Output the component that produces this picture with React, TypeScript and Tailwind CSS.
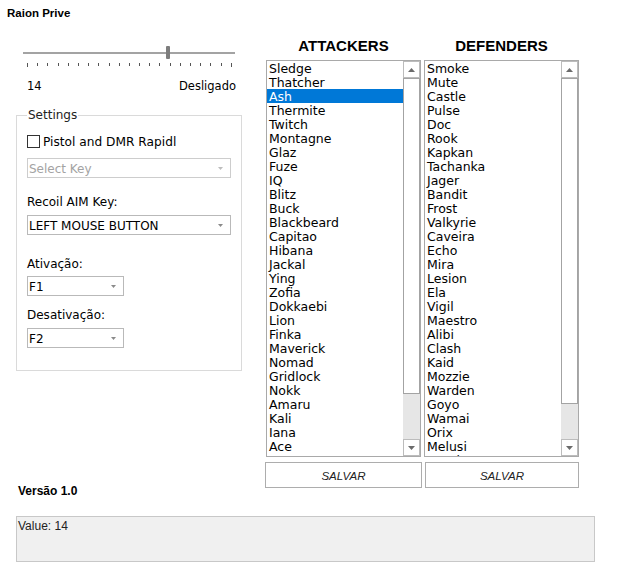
import React from "react";

const attackers = [
  "Sledge", "Thatcher", "Ash", "Thermite", "Twitch", "Montagne", "Glaz", "Fuze", "IQ", "Blitz",
  "Buck", "Blackbeard", "Capitao", "Hibana", "Jackal", "Ying", "Zofia", "Dokkaebi", "Lion", "Finka",
  "Maverick", "Nomad", "Gridlock", "Nokk", "Amaru", "Kali", "Iana", "Ace",
];

const defenders = [
  "Smoke", "Mute", "Castle", "Pulse", "Doc", "Rook", "Kapkan", "Tachanka", "Jager", "Bandit",
  "Frost", "Valkyrie", "Caveira", "Echo", "Mira", "Lesion", "Ela", "Vigil", "Maestro", "Alibi",
  "Clash", "Kaid", "Mozzie", "Warden", "Goyo", "Wamai", "Orix", "Melusi", "Aruni", "Thunderbird",
];

function Arrow({ up, color = "#6b6b6b" }: { up?: boolean; color?: string }) {
  return (
    <svg width="7" height="4" viewBox="0 0 7 4">
      {up ? <polygon points="0,4 7,4 3.5,0" fill={color} /> : <polygon points="0,0 7,0 3.5,4" fill={color} />}
    </svg>
  );
}

function Combo({ text, width, disabled }: { text: string; width: string; disabled?: boolean }) {
  return (
    <div
      className={`${width} h-[20px] flex items-center justify-between bg-white border pl-[1px] pr-[7px] ${
        disabled ? "border-[#cdcdcd] text-[#a3a3a3]" : "border-[#b9b9b9] text-black"
      }`}
    >
      <span className="leading-[14px] pt-[1px]">{text}</span>
      <svg width="5" height="3" viewBox="0 0 5 3">
        <polygon points="0,0 5,0 2.5,3" fill={disabled ? "#bdbdbd" : "#8a8a8a"} />
      </svg>
    </div>
  );
}

function ListBox({ items, selected, thumb }: { items: string[]; selected?: number; thumb: string }) {
  return (
    <div className="w-[155px] h-[397px] border border-[#a9a9a9] bg-white flex overflow-hidden">
      <div className="w-[136px] h-full overflow-hidden font-['DejaVu_Sans',Verdana,sans-serif] text-[12.5px] leading-[14px]">
        {items.map((it, i) => (
          <div
            key={it}
            className={`h-[14px] pl-[2px] pt-[1px] whitespace-nowrap ${i === selected ? "bg-[#0078d7] text-white" : "text-black"}`}
          >
            <span className="block -mt-[1px] pt-[1px] leading-[14px]">{it}</span>
          </div>
        ))}
      </div>
      <div className="w-[17px] h-full flex flex-col bg-[#e6e6e6]">
        <div className="h-[17px] shrink-0 border border-[#bcbcbc] bg-white flex items-center justify-center">
          <Arrow up />
        </div>
        <div className={`${thumb} shrink-0 border border-[#a3a3a3] bg-white`} />
        <div className="flex-1" />
        <div className="h-[17px] shrink-0 border border-[#bcbcbc] bg-white flex items-center justify-center">
          <Arrow />
        </div>
      </div>
    </div>
  );
}

export default function App() {
  const ticks = Array.from({ length: 21 }, (_, i) => i);
  return (
    <div className="w-[624px] h-[573px] bg-white overflow-hidden text-black font-['DejaVu_Sans',Verdana,sans-serif]">
      <div className="pl-[7px] pt-[6px] h-[26px] font-['Liberation_Sans',Arial,sans-serif] font-bold text-[11.5px] leading-[14px]">
        Raion Prive
      </div>

      <div className="flex items-start pl-[16px]">
        {/* Left column */}
        <div className="w-[225px] flex flex-col">
          <div className="ml-[7px] mt-[26px] w-[212px] h-[2px] bg-[#a3a3a3] relative">
            <div className="absolute left-[143px] -top-[6px] w-[4px] h-[13px] bg-[#7d7d7d] rounded-[1px]" />
          </div>
          <div className="ml-[11px] mt-[9px] w-[205px] h-[4px] flex justify-between items-start">
            {ticks.map((t) => (
              <div
                key={t}
                className={`w-[1px] bg-[#555] ${t === 0 || t === 20 ? "h-[4px]" : "h-[3px]"}`}
              />
            ))}
          </div>
          <div className="ml-[11px] mt-[12px] w-[209px] flex justify-between text-[11.5px] leading-[14px]">
            <span>14</span>
            <span>Desligado</span>
          </div>

          <fieldset className="mt-[15px] w-[225px] border border-[#dadada] pl-[10px] pr-[10px] pb-[22px] text-[12px]">
            <legend className="px-[1px] text-[12px] leading-[14px] text-[#222]">Settings</legend>
            <div className="mt-[13px] flex items-center h-[13px]">
              <div className="w-[13px] h-[13px] border border-[#333] bg-white" />
              <span className="ml-[3px] leading-[14px] text-[12.2px]">Pistol and DMR Rapidl</span>
            </div>
            <div className="mt-[10px]">
              <Combo text="Select Key" width="w-[204px]" disabled />
            </div>
            <div className="mt-[17px] h-[14px] leading-[14px]">Recoil AIM Key:</div>
            <div className="mt-[6px]">
              <Combo text="LEFT MOUSE BUTTON" width="w-[204px]" />
            </div>
            <div className="mt-[22px] h-[14px] leading-[14px]">Ativação:</div>
            <div className="mt-[5px]">
              <Combo text="F1" width="w-[97px]" />
            </div>
            <div className="mt-[12px] h-[14px] leading-[14px]">Desativação:</div>
            <div className="mt-[6px]">
              <Combo text="F2" width="w-[97px]" />
            </div>
          </fieldset>

          <div className="mt-[113px] ml-[2px] h-[14px] leading-[14px] font-['Liberation_Sans',Arial,sans-serif] font-bold text-[12px]">
            Versão 1.0
          </div>
        </div>

        {/* Right section */}
        <div className="ml-[24px] flex gap-[2px]">
          <div className="w-[157px] flex flex-col">
            <div className="mt-[11px] h-[17px] leading-[18px] text-center font-['Liberation_Sans',Arial,sans-serif] font-bold text-[15px]">
              ATTACKERS
            </div>
            <div className="mt-[6px] ml-[1px]">
              <ListBox items={attackers} selected={2} thumb="h-[316px]" />
            </div>
            <button className="mt-[5px] w-[157px] h-[26px] border border-[#adadad] bg-white italic font-['Liberation_Sans',Arial,sans-serif] text-[11.5px] leading-[16px] pt-[1px] text-[#222]">
              SALVAR
            </button>
          </div>
          <div className="w-[155px] flex flex-col">
            <div className="mt-[11px] h-[17px] leading-[18px] text-center font-['Liberation_Sans',Arial,sans-serif] font-bold text-[15px]">
              DEFENDERS
            </div>
            <div className="mt-[6px]">
              <ListBox items={defenders} thumb="h-[326px]" />
            </div>
            <button className="mt-[5px] ml-[1px] w-[154px] h-[26px] border border-[#adadad] bg-white italic font-['Liberation_Sans',Arial,sans-serif] text-[11.5px] leading-[16px] pt-[1px] text-[#222]">
              SALVAR
            </button>
          </div>
        </div>
      </div>

      <div className="ml-[16px] mt-[18px] w-[579px] h-[46px] bg-[#f0f0f0] border border-[#c8c8c8] pl-[1px] pt-[2px] font-['Liberation_Sans',Arial,sans-serif] text-[12px] leading-[14px] text-[#222]">
        Value: 14
      </div>
    </div>
  );
}
